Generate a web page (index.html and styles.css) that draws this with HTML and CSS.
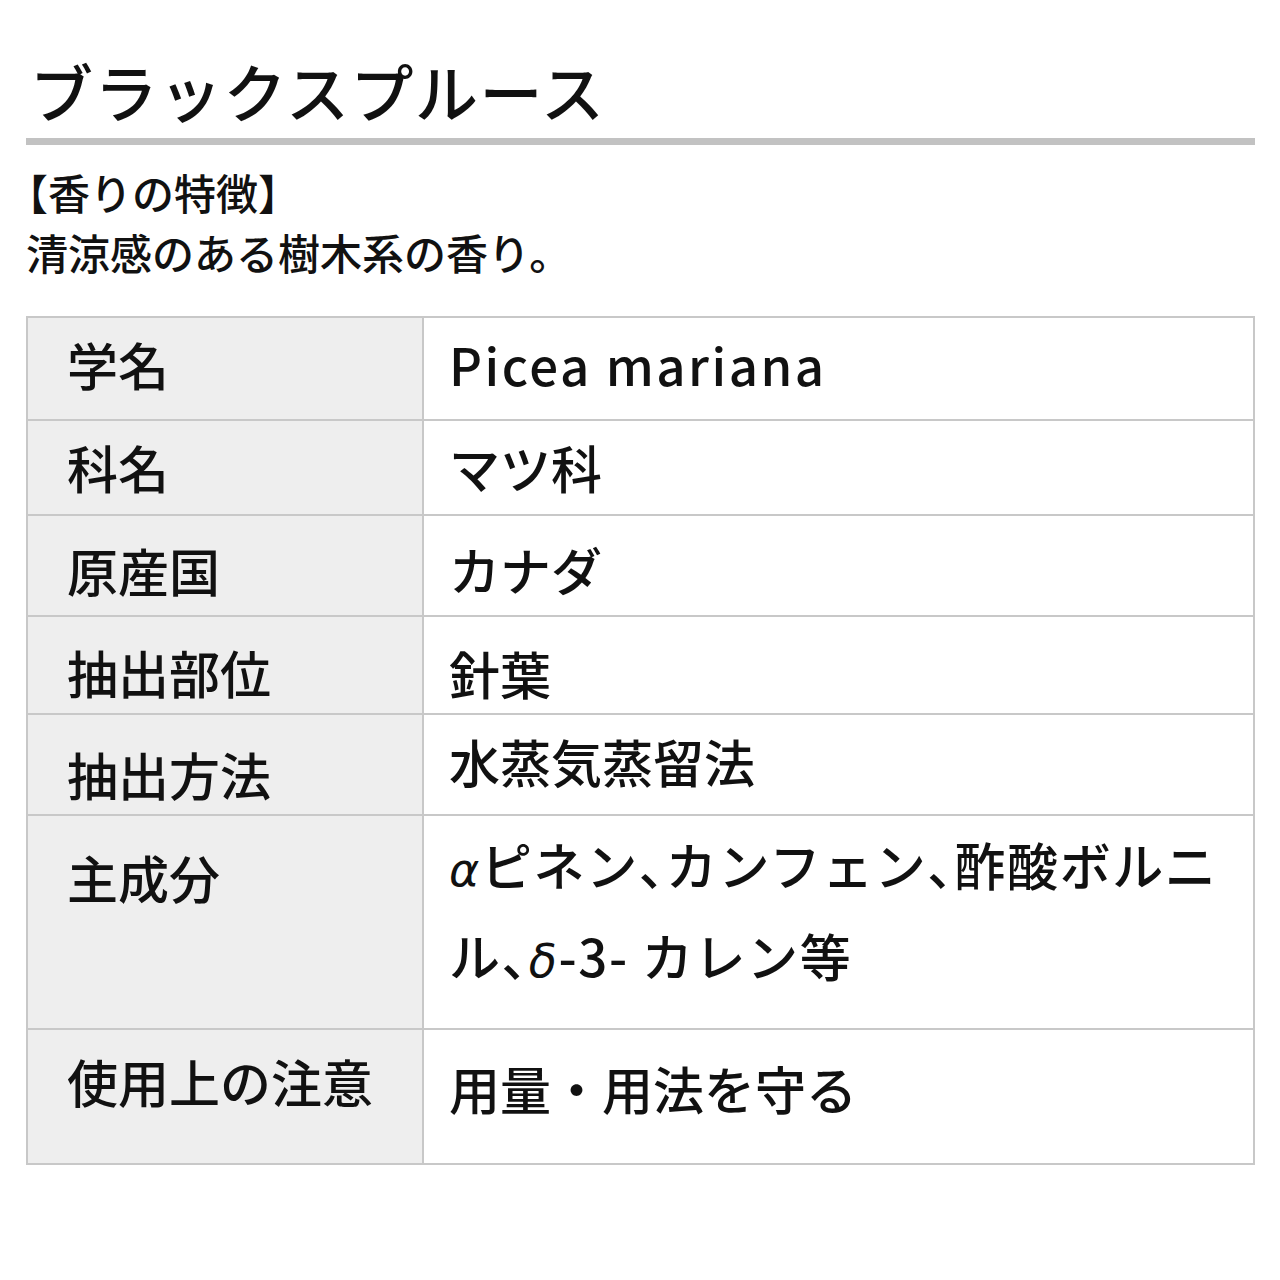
FILE: index.html
```html
<!DOCTYPE html>
<html lang="ja">
<head>
<meta charset="utf-8">
<title>ブラックスプルース</title>
<link rel="stylesheet" href="styles.css">
</head>
<body>
<div class="page">
  <h1 class="title">ブラックスプルース</h1>
  <div class="rule"></div>
  <div class="feature">
    <p class="feature-label">【香りの特徴】</p>
    <p class="feature-text">清涼感のある樹木系の香り。</p>
  </div>
  <div class="table">
    <div class="row r1"><div class="th">学名</div><div class="td latin">Picea mariana</div></div>
    <div class="row r2"><div class="th">科名</div><div class="td">マツ科</div></div>
    <div class="row r3"><div class="th">原産国</div><div class="td">カナダ</div></div>
    <div class="row r4"><div class="th">抽出部位</div><div class="td">針葉</div></div>
    <div class="row r5"><div class="th">抽出方法</div><div class="td">水蒸気蒸留法</div></div>
    <div class="row r6"><div class="th">主成分</div><div class="td multi"><span class="greek">α</span>ピネン<span class="comma">、</span>カンフェン<span class="comma">、</span>酢酸ボルニル<span class="comma">、</span><span class="greek">δ</span>-3- カレン等</div></div>
    <div class="row r7"><div class="th">使用上の注意</div><div class="td">用量・用法を守る</div></div>
  </div>
</div>
</body>
</html>
```

FILE: styles.css
```css
* { box-sizing: border-box; }
html, body { margin: 0; padding: 0; background: #ffffff; }
body {
  font-family: "Noto Sans CJK JP", "Noto Sans", sans-serif;
  color: #111111;
  width: 1280px;
  height: 1280px;
  overflow: hidden;
}
.page {
  padding: 50px 25px 0 26px;
}
.title {
  margin: 0 0 0 4px;
  font-size: 63px;
  font-weight: 500;
  line-height: 80px;
  height: 80px;
  letter-spacing: 1.5px;
}
.rule {
  margin-top: 8px;
  height: 7px;
  width: 1229px;
  background: #c2c2c2;
}
.feature {
  margin-top: 17px;
}
.feature p {
  margin: 0;
  font-size: 42px;
  font-weight: 500;
  line-height: 60px;
  height: 60px;
}
.feature .feature-label { margin-left: -20px; }
.table {
  margin-top: 34px;
  width: 1229px;
  border-left: 2px solid #c8c8c8;
  border-right: 2px solid #c8c8c8;
  border-bottom: 2px solid #c8c8c8;
}
.row {
  display: grid;
  grid-template-columns: 396px 1fr;
  border-top: 2px solid #c8c8c8;
}
.th, .td {
  font-size: 51px;
  font-weight: 500;
  line-height: 60px;
}
.th {
  background: #eeeeee;
  border-right: 2px solid #c8c8c8;
  padding-left: 39px;
}
.td {
  padding-left: 25px;
  padding-right: 20px;
}
.latin { letter-spacing: 2.5px; }
.greek { font-style: italic; font-family: "DejaVu Sans", sans-serif; font-weight: 400; font-size: 46px; }
.comma { font-feature-settings: "halt"; }
.multi { line-height: 85px; letter-spacing: 1.6px; }

.r1 { height: 103px; }
.r1 .th, .r1 .td { padding-top: 16px; }
.r2 { height: 95px; }
.r2 .th, .r2 .td { padding-top: 16px; }
.r3 { height: 101px; }
.r3 .th { padding-top: 24px; }
.r3 .td { padding-top: 23px; }
.r4 { height: 98px; }
.r4 .th { padding-top: 25px; }
.r4 .td { padding-top: 26px; }
.r5 { height: 101px; }
.r5 .th { padding-top: 29px; }
.r5 .td { padding-top: 16px; }
.r6 { height: 214px; }
.r6 .th { padding-top: 31px; }
.r6 .td { padding-top: 6px; }
.r7 { height: 135px; }
.r7 .th { padding-top: 21px; }
.r7 .td { padding-top: 28px; }
```
